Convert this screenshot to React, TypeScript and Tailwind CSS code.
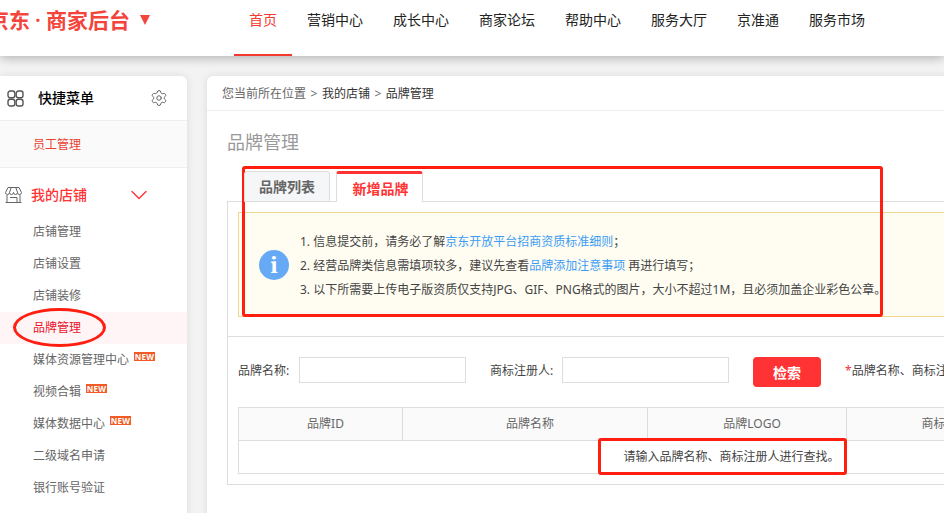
import React from 'react'
import { ChevronDown, Settings } from 'lucide-react'

const navItems = ['首页', '营销中心', '成长中心', '商家论坛', '帮助中心', '服务大厅', '京准通', '服务市场']

const menuItems = [
  { label: '店铺管理' },
  { label: '店铺设置' },
  { label: '店铺装修' },
  { label: '品牌管理', active: true },
  { label: '媒体资源管理中心', isNew: true },
  { label: '视频合辑', isNew: true },
  { label: '媒体数据中心', isNew: true },
  { label: '二级域名申请' },
  { label: '银行账号验证' },
]

// the last column runs past the right edge of the window
const columns = [
  { label: '品牌ID', width: 'w-[164px]' },
  { label: '品牌名称', width: 'w-[245px]' },
  { label: '品牌LOGO', width: 'w-[199px]' },
  { label: '商标注册人', width: 'w-[200px]' },
  { label: '', width: 'w-[176px]' },
]

const NewBadge = () => (
  <span className="ml-[5px] -mt-[7px] flex h-[9px] w-[21px] items-center justify-center bg-[#f15a24] text-[8px] leading-none font-bold tracking-[0.3px] text-white">
    NEW
  </span>
)

const GridIcon = () => (
  <svg width="17" height="17" viewBox="0 0 17 17" fill="none" stroke="#555" strokeWidth="1.4">
    <rect x="1" y="1" width="6.8" height="6.8" rx="2.2" />
    <rect x="9.2" y="1" width="6.8" height="6.8" rx="2.2" />
    <rect x="1" y="9.2" width="6.8" height="6.8" rx="2.2" />
    <rect x="9.2" y="9.2" width="6.8" height="6.8" rx="2.2" />
  </svg>
)

const StoreIcon = () => (
  <svg width="17" height="16" viewBox="0 0 17 16" fill="none" stroke="#666" strokeWidth="1">
    <path d="M3 .5h11l2.5 5a2 2 0 0 1-4 0 2 2 0 0 1-4 0 2 2 0 0 1-4 0 2 2 0 0 1-4 0z" />
    <path d="M6.2.5 4.5 5.5M10.8.5l1.7 5" />
    <path d="M2 8v7.5h13V8" />
    <path d="M.5 15.5h16" />
    <path d="M5 10.5h7v5" />
  </svg>
)

export default function App() {
  return (
    <div
      className="relative h-[513px] w-[944px] overflow-hidden bg-[#f3f3f3] text-xs text-[#666]"
      style={{ fontFamily: '"Noto Sans", "Noto Sans CJK SC", sans-serif' }}
    >
      {/* Top bar */}
      <header className="relative z-10 flex h-14 bg-white shadow-[0_2px_10px_rgba(0,0,0,0.28)]">
        <div className="-ml-3 flex h-10 w-[246px] items-center text-[21px] leading-none font-semibold text-[#f4453c]">
          <span>京东</span>
          <span className="w-4 text-center">·</span>
          <span>商家后台</span>
          <span className="ml-2.5 h-0 w-0 border-x-[5px] border-t-[10px] border-x-transparent border-t-[#f4453c]" />
        </div>
        <nav className="flex">
          {navItems.map((item, i) => (
            <a
              key={item}
              className={`flex h-14 justify-center px-[15px] pt-2.5 text-sm leading-[19px] ${
                i === 0 ? 'border-b-2 border-[#f4392f] text-[#f4392f]' : 'text-[#222]'
              }`}
            >
              {item}
            </a>
          ))}
        </nav>
      </header>

      <div className="flex gap-5 pt-5">
        {/* Side menu */}
        <aside className="h-[460px] w-[187px] shrink-0 rounded-tr-md bg-white shadow-[0_0_8px_rgba(0,0,0,0.1)]">
          <div className="flex h-[45px] items-center border-b border-[#eee] pr-[19px] pl-[7px]">
            <GridIcon />
            <span className="ml-[14px] flex-1 text-sm font-medium text-black">快捷菜单</span>
            <Settings size={18} strokeWidth={1.2} className="text-[#555]" />
          </div>
          <div className="flex h-[47px] items-center border-b border-[#eee] bg-[#fafafa] pt-px pl-[33px] text-[#e9402f]">
            员工管理
          </div>
          <div className="flex h-12 items-center pt-1.5 pl-[5px] text-sm font-medium text-[#f33]">
            <StoreIcon />
            <span className="ml-[9px] w-[94px]">我的店铺</span>
            <ChevronDown size={28} strokeWidth={1.2} />
          </div>
          <ul>
            {menuItems.map((item) => (
              <li
                key={item.label}
                className={`flex h-8 items-center pl-[33px] ${item.active ? 'bg-[#fff5f6] text-[#e8142c]' : ''}`}
              >
                {item.label}
                {item.isNew && <NewBadge />}
              </li>
            ))}
          </ul>
        </aside>

        {/* Main card */}
        <main className="h-[460px] w-[900px] shrink-0 rounded-tl-md bg-white shadow-[0_0_8px_rgba(0,0,0,0.1)]">
          <div className="flex h-[35px] items-center border-b border-[#eee] pt-0.5 pl-[15px] text-[#333]">
            <span className="text-[#666]">您当前所在位置</span>
            <span className="mx-[4.5px] text-[#666]">&gt;</span>
            <span>我的店铺</span>
            <span className="mx-[4.5px] text-[#666]">&gt;</span>
            <span>品牌管理</span>
          </div>
          <h1 className="pt-[19px] pb-4 pl-5 text-lg leading-[25px] text-[#999]">品牌管理</h1>

          <div className="ml-5">
            <div className="relative z-[1] -mb-px flex pl-[17px] text-sm font-bold">
              <div className="flex h-[31px] w-[86px] items-center justify-center rounded-t-[3px] border border-[#ddd] bg-[#f5f6f8] text-[#666]">
                品牌列表
              </div>
              <div className="ml-1.5 flex h-[31px] w-[87px] items-center justify-center rounded-t-[3px] border-x border-t-[3px] border-x-[#ddd] border-t-[#f33] bg-white pt-px pl-0.5 text-[#f33]">
                新增品牌
              </div>
            </div>

            <section className="h-[284px] border border-[#ddd] pt-2.5">
              <div className="ml-2.5 flex h-[105px] items-center border border-[#f0d98c] bg-[#fffdf1] pl-5">
                <span className="flex h-[30px] w-[30px] items-center justify-center rounded-full bg-[#66aaf6] font-serif text-[24px] leading-none font-bold text-white">
                  i
                </span>
                <ol className="ml-[11px] pt-0.5 leading-6 text-[#444]">
                  <li>
                    1. 信息提交前，请务必了解<a className="text-[#3b9cf5]">京东开放平台招商资质标准细则</a>；
                  </li>
                  <li>
                    2. 经营品牌类信息需填项较多，建议先查看<a className="text-[#3b9cf5]">品牌添加注意事项</a> 再进行填写；
                  </li>
                  <li>3. 以下所需要上传电子版资质仅支持JPG、GIF、PNG格式的图片，大小不超过1M，且必须加盖企业彩色公章。</li>
                </ol>
              </div>

              <div className="mt-[19px] flex h-[71px] items-start border-t border-[#ddd] pt-5 pl-2.5 text-[#444]">
                <label className="mt-1.5 w-[61px]">品牌名称:</label>
                <input className="h-[26px] w-[167px] border border-[#ddd]" />
                <label className="mt-1.5 ml-6 w-[72px]">商标注册人:</label>
                <input className="h-[26px] w-[167px] border border-[#ddd]" />
                <button className="ml-6 h-[30px] w-[68px] rounded-sm bg-[#f33] pt-0.5 text-sm font-bold text-white">
                  检索
                </button>
                <span className="mt-1.5 ml-6 whitespace-nowrap">
                  <span className="text-[#e33]">*</span>品牌名称、商标注册人至少填写一项
                </span>
              </div>

              <table className="ml-2.5 w-[984px] max-w-none table-fixed border-collapse text-center">
                <thead>
                  <tr className="h-[33px] bg-[#fafafa]">
                    {columns.map((col) => (
                      <th key={col.label} className={`${col.width} border border-[#ddd] pl-2.5 font-normal`}>
                        {col.label}
                      </th>
                    ))}
                  </tr>
                </thead>
                <tbody>
                  <tr className="h-[33px]">
                    <td colSpan={5} className="border border-[#ddd] pl-0.5 text-[#444]">
                      请输入品牌名称、商标注册人进行查找。
                    </td>
                  </tr>
                </tbody>
              </table>
            </section>
          </div>
        </main>
      </div>

      {/* Red marks drawn over the screenshot */}
      <div className="absolute top-[166px] left-[242px] h-[151px] w-[641px] rounded-[3px] border-[3px] border-[#ff1e10]" />
      <div className="absolute top-[438px] left-[598px] h-[37px] w-[249px] rounded-[3px] border-[3px] border-[#ff1e10]" />
      <div className="absolute top-[308px] left-[13px] h-[39px] w-[93px] rounded-[50%] border-[3px] border-[#ff1e10]" />
    </div>
  )
}
